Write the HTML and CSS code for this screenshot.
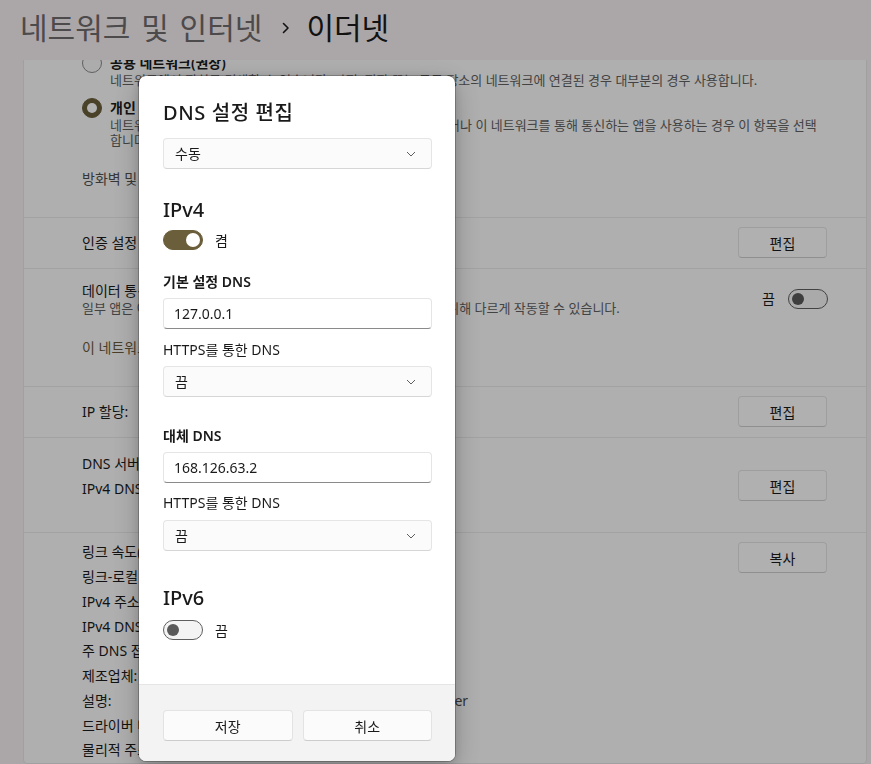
FILE: index.html
```html
<!DOCTYPE html>
<html lang="ko">
<head>
<meta charset="utf-8">
<title>이더넷</title>
<link rel="stylesheet" href="styles.css">
</head>
<body>
<div class="window">
  <header class="page-title">
    <span class="crumb">네트워크 및 인터넷</span>
    <svg class="crumb-sep" width="8" height="12" viewBox="0 0 8 12"><polyline points="1.5,1.5 6,6 1.5,10.5" fill="none" stroke="currentColor" stroke-width="1.6" stroke-linecap="round" stroke-linejoin="round"/></svg>
    <span class="crumb current">이더넷</span>
  </header>
  <main class="content">
    <div class="card-stack">
      <section class="card">
        <div class="row row-profile">
          <div class="radio-item">
            <span class="radio"></span>
            <div class="radio-text">
              <div class="radio-label">공용 네트워크(권장)</div>
              <div class="radio-desc">네트워크에서 장치를 검색할 수 없습니다. 가정, 직장 또는 공공 장소의 네트워크에 연결된 경우 대부분의 경우 사용합니다.</div>
            </div>
          </div>
          <div class="radio-item">
            <span class="radio checked"></span>
            <div class="radio-text">
              <div class="radio-label">개인 네트워크</div>
              <div class="radio-desc">네트워크에서 장치들을 검색할 수 있습니다. 파일 공유가 필요하거나 이 네트워크를 통해 통신하는 앱을 사용하는 경우 이 항목을 선택<br>합니다.</div>
            </div>
          </div>
          <div class="plain-link">방화벽 및 보안 설정 구성</div>
        </div>

        <div class="row row-center">
          <div class="row-title">인증 설정</div>
          <button class="btn">편집</button>
        </div>

        <div class="row row-metered">
          <div class="metered-top">
            <div class="metered-text">
              <div class="row-title">데이터 통신 연결</div>
              <div class="row-sub">일부 앱은 이 네트워크에 연결되어있는 경우 데이터 사용량을 줄이기 위해 다르게 작동할 수 있습니다.</div>
            </div>
            <div class="toggle-wrap">
              <span class="toggle-state">끔</span>
              <span class="toggle"></span>
            </div>
          </div>
          <div class="accent-link">이 네트워크에서 데이터 사용량을 제어하는 데이터 제한 설정</div>
        </div>

        <div class="row row-center">
          <div class="row-title">IP 할당:</div>
          <button class="btn">편집</button>
        </div>

        <div class="row row-dns">
          <div class="prop-grid">
            <span>DNS 서버 할당:</span><span class="val">수동</span>
            <span>IPv4 DNS 서버:</span><span class="val">127.0.0.1(암호화되지 않음)</span>
            <span></span><span class="val">168.126.63.2(암호화되지 않음)</span>
          </div>
          <button class="btn btn-dns">편집</button>
        </div>

        <div class="row row-props">
          <div class="prop-grid">
            <span>링크 속도(수신/전송):</span><span class="val">1000/1000(Mbps)</span>
            <span>링크-로컬 IPv6 주소:</span><span class="val">fe80::1c2d:3e4f:5a6b%7</span>
            <span>IPv4 주소:</span><span class="val">192.168.0.10</span>
            <span>IPv4 DNS 서버:</span><span class="val">127.0.0.1</span>
            <span>주 DNS 접미사:</span><span class="val">lan</span>
            <span>제조업체:</span><span class="val">Realtek</span>
            <span>설명:</span><span class="val">Realtek PCIe GbE Family Controller</span>
            <span>드라이버 버전:</span><span class="val">10.68.815.2023</span>
            <span>물리적 주소(MAC):</span><span class="val">00-1A-2B-3C-4D-5E</span>
          </div>
          <button class="btn btn-copy">복사</button>
        </div>
      </section>
    </div>
  </main>
</div>

<div class="scrim"></div>

<div class="dialog" role="dialog" aria-label="DNS 설정 편집">
  <div class="dialog-body">
    <h1 class="dlg-title">DNS 설정 편집</h1>
    <div class="select mt-11"><span>수동</span><svg class="chev" width="10" height="6" viewBox="0 0 10 6"><polyline points="1,1 5,5 9,1" fill="none" stroke="currentColor" stroke-width="1"/></svg></div>

    <h2 class="dlg-section mt-27">IPv4</h2>
    <div class="switch-row mt-6"><span class="toggle on"></span><span class="switch-label">켬</span></div>

    <div class="field-label strong mt-22">기본 설정 DNS</div>
    <div class="input mt-6">127.0.0.1</div>
    <div class="field-label mt-11">HTTPS를 통한 DNS</div>
    <div class="select mt-6"><span>끔</span><svg class="chev" width="10" height="6" viewBox="0 0 10 6"><polyline points="1,1 5,5 9,1" fill="none" stroke="currentColor" stroke-width="1"/></svg></div>

    <div class="field-label strong mt-29">대체 DNS</div>
    <div class="input mt-6">168.126.63.2</div>
    <div class="field-label mt-10">HTTPS를 통한 DNS</div>
    <div class="select mt-7"><span>끔</span><svg class="chev" width="10" height="6" viewBox="0 0 10 6"><polyline points="1,1 5,5 9,1" fill="none" stroke="currentColor" stroke-width="1"/></svg></div>

    <h2 class="dlg-section mt-33">IPv6</h2>
    <div class="switch-row mt-8"><span class="toggle"></span><span class="switch-label">끔</span></div>
  </div>
  <div class="dialog-footer">
    <button class="dbtn">저장</button>
    <button class="dbtn">취소</button>
  </div>
</div>
</body>
</html>
```
FILE: styles.css
```css
* { box-sizing: border-box; }

html, body { margin: 0; padding: 0; }

body {
  width: 871px;
  height: 764px;
  overflow: hidden;
  background: #f5eff2;
  font-family: "Noto Sans", "Noto Sans CJK KR", sans-serif;
  color: #1a1a1a;
}

/* ---------- page header ---------- */
.page-title {
  height: 60px;
  display: flex;
  align-items: center;
  padding: 0 0 4px 20px;
  font-size: 30px;
  line-height: 40px;
}
.crumb { color: #6f6a6c; }
.crumb:first-child { word-spacing: 3px; }
.crumb.current { color: #1a1a1a; }
.crumb-sep { margin: 0 16px 0 20px; color: #1a1a1a; }

/* ---------- scrolling content ---------- */
.content {
  height: 704px;
  overflow: hidden;
  padding: 0 4px 0 23px;
}
.card-stack { margin-top: -24px; }
.card {
  background: #fbfbfb;
  border: 1px solid #e6e6e6;
  border-radius: 4px;
}
.row {
  display: flex;
  border-top: 1px solid #e9e9e9;
  padding: 9px 39px 10px 58px;
  font-size: 14px;
  line-height: 20px;
}
.row:first-child { border-top: 0; }
.row-center { align-items: center; justify-content: space-between; }
.row-title { font-size: 14px; line-height: 20px; color: #1a1a1a; }
.row-sub { font-size: 13px; line-height: 15px; color: #606060; white-space: nowrap; }

/* profile radios */
.row-profile {
  flex-direction: column;
  padding: 16px 39px 28px 58px;
}
.radio-item { display: flex; align-items: flex-start; }
.radio-item + .radio-item { margin-top: 10px; }
.radio {
  flex: none;
  width: 20px;
  height: 20px;
  border-radius: 50%;
  border: 1px solid #8a8a8a;
  background: #f7f7f7;
  margin-right: 8px;
  display: flex;
  align-items: center;
  justify-content: center;
}
.radio.checked { background: #6b5e3b; border-color: #6b5e3b; }
.radio.checked::after {
  content: "";
  width: 10px;
  height: 10px;
  border-radius: 50%;
  background: #ffffff;
}
.radio-label { font-size: 14px; line-height: 20px; font-weight: 600; }
.radio-desc { font-size: 13px; line-height: 15px; color: #606060; white-space: nowrap; }
.plain-link { margin-top: 21px; color: #505050; font-size: 14px; line-height: 20px; }

/* metered row */
.row-metered {
  flex-direction: column;
  padding: 12px 38px 28px 58px;
}
.metered-top { display: flex; align-items: center; justify-content: space-between; }
.toggle-wrap { display: flex; align-items: center; gap: 13px; }
.toggle-state { font-size: 14px; line-height: 20px; }
.accent-link { margin-top: 22px; color: #6a5a3c; font-size: 14px; line-height: 20px; white-space: nowrap; }

/* property grids */
.row-dns { padding: 14px 39px 6px 58px; justify-content: space-between; }
.row-props { padding: 7px 39px 0 58px; justify-content: space-between; }
.prop-grid {
  display: grid;
  grid-template-columns: 158px auto;
  line-height: 24.75px;
  font-size: 14px;
  white-space: nowrap;
}
.prop-grid .val { color: #4a4a4a; }
.btn-dns { margin-top: 18px; }
.btn-copy { margin-top: 2px; }

/* buttons */
.btn {
  flex: none;
  width: 89px;
  height: 31px;
  border: 1px solid #e3e3e3;
  border-bottom-color: #cdcdcd;
  border-radius: 4px;
  background: #fdfdfd;
  font-family: inherit;
  font-size: 14px;
  color: #1a1a1a;
  padding: 0;
}

/* toggles */
.toggle {
  flex: none;
  width: 40px;
  height: 20px;
  border-radius: 10px;
  border: 1px solid #5f5f5f;
  background: #f4f4f4;
  display: flex;
  align-items: center;
  padding-left: 3px;
}
.toggle::after {
  content: "";
  width: 12px;
  height: 12px;
  border-radius: 50%;
  background: #5a5a5a;
}
.toggle.on {
  background: #6b5e3b;
  border-color: #6b5e3b;
  justify-content: flex-end;
  padding: 0 2px 0 0;
}
.toggle.on::after { width: 14px; height: 14px; background: #ffffff; }

/* ---------- scrim + dialog ---------- */
.scrim {
  position: fixed;
  inset: 0;
  background: rgba(0, 0, 0, 0.3);
}

.dialog {
  position: fixed;
  left: 138px;
  top: 75px;
  width: 318px;
  height: 687px;
  display: flex;
  flex-direction: column;
  background: #ffffff;
  background-clip: padding-box;
  border: 1px solid rgba(0, 0, 0, 0.22);
  border-radius: 8px;
  overflow: hidden;
  box-shadow: 0 8px 28px rgba(0, 0, 0, 0.22), 0 2px 8px rgba(0, 0, 0, 0.12);
}
.dialog-body { flex: 1; padding: 23px 23px 0 24px; }

.dlg-title {
  margin: 0;
  font-size: 20px;
  line-height: 28px;
  font-weight: 500;
  letter-spacing: 0.6px;
  color: #1a1a1a;
}
.dlg-section {
  margin-bottom: 0;
  font-size: 20px;
  line-height: 28px;
  font-weight: 500;
  color: #1a1a1a;
}
.field-label { font-size: 14px; line-height: 20px; color: #1a1a1a; }
.field-label.strong { font-weight: 600; }

.select,
.input {
  height: 31px;
  border: 1px solid #e5e5e5;
  border-radius: 4px;
  background: #fbfbfb;
  font-size: 14px;
  line-height: 20px;
  display: flex;
  align-items: center;
}
.select { justify-content: space-between; padding: 0 15px 0 11px; border-bottom-color: #d6d6d6; }
.input { padding: 0 10px; border-bottom-color: #8a8a8a; background: #ffffff; }
.chev { color: #5f5f5f; }

.switch-row { display: flex; align-items: center; height: 20px; }
.switch-label { margin-left: 12px; font-size: 14px; line-height: 20px; padding-top: 2px; }

.dialog-footer {
  flex: none;
  display: grid;
  grid-template-columns: 1fr 1fr;
  gap: 10px;
  padding: 25px 23px 20px 24px;
  background: #f3f3f3;
  border-top: 1px solid #e5e5e5;
}
.dbtn {
  height: 31px;
  border: 1px solid #e3e3e3;
  border-bottom-color: #cccccc;
  border-radius: 4px;
  background: #fbfbfb;
  font-family: inherit;
  font-size: 14px;
  color: #1a1a1a;
  padding: 0;
}

/* spacing helpers */
.mt-6 { margin-top: 6px; }
.mt-7 { margin-top: 7px; }
.mt-8 { margin-top: 8px; }
.mt-10 { margin-top: 10px; }
.mt-11 { margin-top: 11px; }
.mt-22 { margin-top: 22px; }
.mt-27 { margin-top: 27px; }
.mt-29 { margin-top: 29px; }
.mt-33 { margin-top: 33px; }
```
